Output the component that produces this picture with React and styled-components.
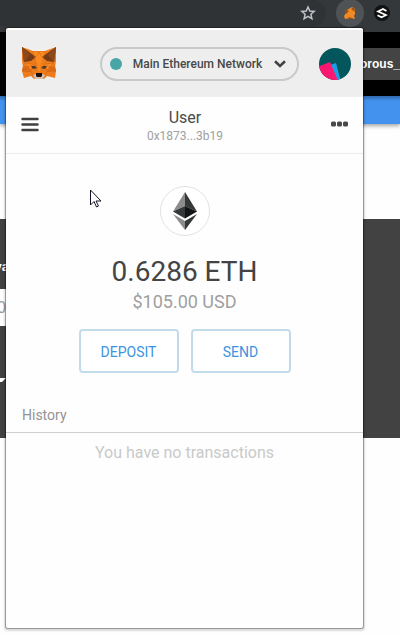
import React from "react";
import styled, { createGlobalStyle } from "styled-components";

const GlobalStyle = createGlobalStyle`
  * { box-sizing: border-box; }
  html, body { margin: 0; overflow: hidden; background: #fefefe; }
  body, button { font-family: Roboto, "Open Sans", sans-serif; }
  button { padding: 0; margin: 0; border: 0; background: none; cursor: pointer; }
  svg { display: block; }
`;

const Screen = styled.div`
  position: relative;
  min-height: 100vh;
  overflow: hidden;
`;

const BrowserBar = styled.div`
  display: flex;
  justify-content: flex-end;
  align-items: center;
  height: 32px;
  padding-right: 10px;
  padding-bottom: 6px;
  background: #35383a;
`;

const Omnibox = styled.div`
  display: flex;
  flex: 1;
  justify-content: flex-end;
  align-items: center;
  height: 26px;
  padding-right: 10px;
  margin-right: 10px;
  border-radius: 0 13px 13px 0;
  background: #2f3336;
`;

const Extension = styled.button`
  display: flex;
  align-items: center;
  justify-content: center;
  width: ${(p) => (p.$active ? 28 : 16)}px;
  height: ${(p) => (p.$active ? 28 : 16)}px;
  margin-left: ${(p) => (p.$active ? 0 : 10)}px;
  border-radius: 50%;
  background: ${(p) => (p.$active ? "#505356" : "#101112")};
`;

const SiteHeader = styled.div`
  display: flex;
  justify-content: flex-end;
  align-items: center;
  height: 64px;
  background: #000;
`;

const AccountTag = styled.div`
  display: flex;
  align-items: center;
  justify-content: flex-end;
  width: 80px;
  height: 32px;
  overflow: hidden;
  background: #444;
  color: #fff;
  font: bold 12px/32px "Liberation Sans", Arial, sans-serif;
`;

const BlueBand = styled.div`
  height: 28px;
  background: linear-gradient(#3068ae, #4392ee 5px);
  box-shadow: 0 2px 4px rgba(0, 0, 0, 0.35);
`;

const SitePanel = styled.div`
  height: 219px;
  margin-top: 95px;
  padding-top: 38px;
  background: #424242;
`;

const Sliver = styled.div`
  display: flex;
  justify-content: flex-end;
  width: 9px;
  height: ${(p) => p.$height}px;
  overflow: hidden;
  background: ${(p) => (p.$field ? "#fefefe" : "transparent")};
  color: ${(p) => (p.$field ? "#999" : "#fff")};
  padding-right: ${(p) => (p.$field ? 3 : 0)}px;
  font: ${(p) => (p.$field ? "16px/38px" : "bold 13px/20px")} "Liberation Sans", Arial, sans-serif;
`;

const Marker = styled.div`
  padding-top: 51px;
`;

const Popup = styled.main`
  position: absolute;
  top: 28px;
  right: 37px;
  bottom: 7px;
  left: 6px;
  border-top: 2px solid #fff;
  border-radius: 2px;
  background: #fefefe;
  box-shadow: 0 0 0 1px rgba(0, 0, 0, 0.3), 0 1px 2px 2px rgba(0, 0, 0, 0.14);
`;

const WalletHeader = styled.header`
  display: flex;
  align-items: center;
  justify-content: space-between;
  height: 67px;
  padding: 0 12px 0 16px;
  background: #eee;
`;

const NetworkButton = styled.button`
  display: flex;
  align-items: center;
  justify-content: space-between;
  width: 199px;
  height: 34px;
  padding: 0 11px 0 8px;
  margin-left: 22px;
  border: 2px solid #c9c9c9;
  border-radius: 17px;
  color: #484848;
  font-size: 12px;
  font-weight: 500;
`;

const NetworkDot = styled.span`
  width: 12px;
  height: 12px;
  border-radius: 50%;
  background: #48a5a5;
`;

const AccountBar = styled.div`
  display: flex;
  align-items: center;
  justify-content: space-between;
  height: 57px;
  padding: 0 14px 0 15px;
  border-bottom: 1px solid #ececec;
`;

const IconButton = styled.button`
  padding-bottom: 2px;
`;

const Account = styled.button`
  padding-top: 2px;
  color: #4a4a4a;
  font-size: 16px;
  line-height: 20px;
  text-align: center;
`;

const Address = styled.span`
  display: block;
  color: #a0a0a0;
  font-size: 12px;
  line-height: 16px;
`;

const Balance = styled.section`
  display: flex;
  flex-direction: column;
  align-items: center;
  padding-top: 32px;
`;

const TokenBadge = styled.div`
  display: flex;
  align-items: center;
  justify-content: center;
  width: 50px;
  height: 50px;
  border: 1px solid #e2e2e2;
  border-radius: 50%;
  background: #fff;
`;

const Amount = styled.div`
  margin-top: 19px;
  color: #444;
  font-size: 28px;
  line-height: 34px;
`;

const Fiat = styled.div`
  color: #a0a0a0;
  font-size: 18px;
  line-height: 26px;
`;

const Actions = styled.div`
  display: flex;
  gap: 12px;
  margin-top: 14px;
`;

const ActionButton = styled.button`
  width: 100px;
  height: 44px;
  padding-top: 2px;
  border: 2px solid #c2dbeb;
  border-radius: 4px;
  background: #fff;
  color: #3c93df;
  font-size: 14px;
`;

const HistoryTitle = styled.h2`
  margin: 24px 0 0;
  padding: 8px 16px 7px;
  border-bottom: 1px solid #cdd0d2;
  color: #939393;
  font-size: 14px;
  font-weight: 400;
  line-height: 20px;
`;

const Empty = styled.p`
  margin: 8px 0;
  color: #c8cac9;
  font-size: 16px;
  line-height: 23px;
  text-align: center;
`;

const Cursor = styled.svg`
  position: absolute;
  top: 159px;
  left: 84px;
`;

function Fox() {
  return (
    <svg width="35" height="33" viewBox="0 0 35 33" aria-label="MetaMask" role="img">
      <path fill="#ed7b1c" d="M0 0 11 4h12L34 0v14l-1 6 1 4-1 7-8-2-3 3H12l-3-3-7 2-2-7 1-4-1-6Z" />
      <path fill="#df6d18" d="m1 19-1 5 8 1 4-5Zm32 0 1 5-8 1-4-5Z" />
      <path fill="#fb8b20" d="m11 5 3 12 2 7h3l2-7 2-12ZM4 16l7 1-2 6Zm26 0-7 1 2 6Z" />
      <path fill="#763c17" d="m0 0 14 10-5 4-7 1-1-7Zm34 0L20 10l5 4 7 1 1-7Z" />
      <path fill="#8c491b" d="m0 0 8 8-6 7Zm34 0-8 8 6 7Z" />
      <path fill="none" stroke="#c9610f" strokeWidth=".5" d="m14 10 3-5 3 5M11 4l3 12-5 7M23 4l-3 12 5 7M2 16l9 1-11 7 9 0 3 7M32 16l-9 1 11 7-9 0-3 7M15 16v8m4-8v8" />
      <path fill="#4c3a2d" d="m9 19 4 0 2 2-4 1Zm16 0-4 0-2 2 4 1Z" />
      <path fill="#d5bfb2" d="m11 28 3-1h6l3 1-2 4h-8Z" />
      <path fill="#17120f" d="M14 26h6v3l-1 1h-4l-1-1Z" />
    </svg>
  );
}

function SiteBackdrop() {
  return (
    <>
      <BrowserBar>
        <Omnibox>
          <svg width="16" height="16" viewBox="0 0 16 16">
            <path fill="none" stroke="#c0c4c8" strokeWidth="1.5" d="m8 2 1.8 4 4.4.4-3.3 2.9 1 4.3L8 11.3l-3.900 2.300 1-4.300-3.300-2.900L6.200 6Z" />
          </svg>
        </Omnibox>
        <Extension $active aria-label="MetaMask">
          <svg width="12" height="13" viewBox="0 0 12 13">
            <path fill="#f28a24" d="m3 3 5-3 3 2v5l-1 2 1 3-4-1-6 1-1-3 2-3Z" />
            <path fill="#995019" d="m1 2 4 2-3 3Zm9-2L7 2l4 3ZM5 10l3 1-1 1H4Z" />
          </svg>
        </Extension>
        <Extension aria-label="Extension">
          <svg width="12" height="12" viewBox="0 0 12 12">
            <path fill="none" stroke="#fff" strokeWidth="1.700" d="M10.500 4 7 2 2 4.500 10 8 5.500 10.300 1.500 8.300" />
          </svg>
        </Extension>
      </BrowserBar>
      <SiteHeader>
        <AccountTag>orous_</AccountTag>
      </SiteHeader>
      <BlueBand />
      <SitePanel>
        <Sliver $height={32}>va</Sliver>
        <Sliver $field $height={37}>0</Sliver>
        <Marker>
          <svg width="8" height="6" viewBox="0 0 8 6"><path fill="#fff" d="M0 1h6L2 5H0Z" /></svg>
        </Marker>
      </SitePanel>
    </>
  );
}

export default function App() {
  return (
    <Screen>
      <GlobalStyle />
      <SiteBackdrop />
      <Popup>
        <WalletHeader>
          <Fox />
          <NetworkButton>
            <NetworkDot />
            Main Ethereum Network
            <svg width="12" height="8" viewBox="0 0 12 8">
              <path fill="none" stroke="#444" strokeWidth="2.600" d="m1 1.300 5 4.700 5-4.700" />
            </svg>
          </NetworkButton>
          <svg width="32" height="32" viewBox="0 0 32 32" role="img" aria-label="Account avatar">
            <defs><clipPath id="avatar"><circle cx="16" cy="16" r="16" /></clipPath></defs>
            <g clipPath="url(#avatar)">
              <path fill="#04565d" d="M0 0h32v32H0Z" />
              <path fill="#1b9ee5" d="m11 17 6-2 5 19h-5Z" />
              <path fill="#fb1871" d="m-2 19 13-5 9 21H0Z" />
            </g>
          </svg>
        </WalletHeader>
        <AccountBar>
          <IconButton aria-label="Menu">
            <svg width="18" height="15" viewBox="0 0 18 15">
              <path stroke="#404040" strokeWidth="2.500" strokeLinecap="round" d="M1.500 2h15M1.500 7.500h15M1.500 13h15" />
            </svg>
          </IconButton>
          <Account>User<Address>0x1873...3b19</Address></Account>
          <IconButton aria-label="Account options">
            <svg width="18" height="6" viewBox="0 0 18 6">
              <g fill="#484848"><rect x="0" y=".5" width="5" height="5" rx="1.500" /><rect x="6" y=".5" width="5" height="5" rx="1.500" /><rect x="12" y=".5" width="5" height="5" rx="1.500" /></g>
            </svg>
          </IconButton>
        </AccountBar>
        <Balance>
          <TokenBadge>
            <svg width="24" height="38" viewBox="0 0 24 38" role="img" aria-label="Ethereum">
              <path fill="#8c8c8c" d="M12 0v14L0 19.500Z" />
              <path fill="#343838" d="m12 0 12 19.500L12 14Z" />
              <path fill="#343838" d="M12 14v12.500L0 19.500Z" />
              <path fill="#131515" d="m12 14 12 5.500-12 7Z" />
              <path fill="#8c8c8c" d="m0 22 12 7v9Z" />
              <path fill="#343838" d="m24 22-12 7v9Z" />
            </svg>
          </TokenBadge>
          <Amount>0.6286 ETH</Amount>
          <Fiat>$105.00 USD</Fiat>
          <Actions>
            <ActionButton>DEPOSIT</ActionButton>
            <ActionButton>SEND</ActionButton>
          </Actions>
        </Balance>
        <HistoryTitle>History</HistoryTitle>
        <Empty>You have no transactions</Empty>
        <Cursor width="12" height="19" viewBox="0 0 12 19">
          <path fill="#fff" stroke="#111126" d="M.5 1v15l3.500-3.500L6.500 18l2-1-2.500-5h5Z" />
        </Cursor>
      </Popup>
    </Screen>
  );
}
